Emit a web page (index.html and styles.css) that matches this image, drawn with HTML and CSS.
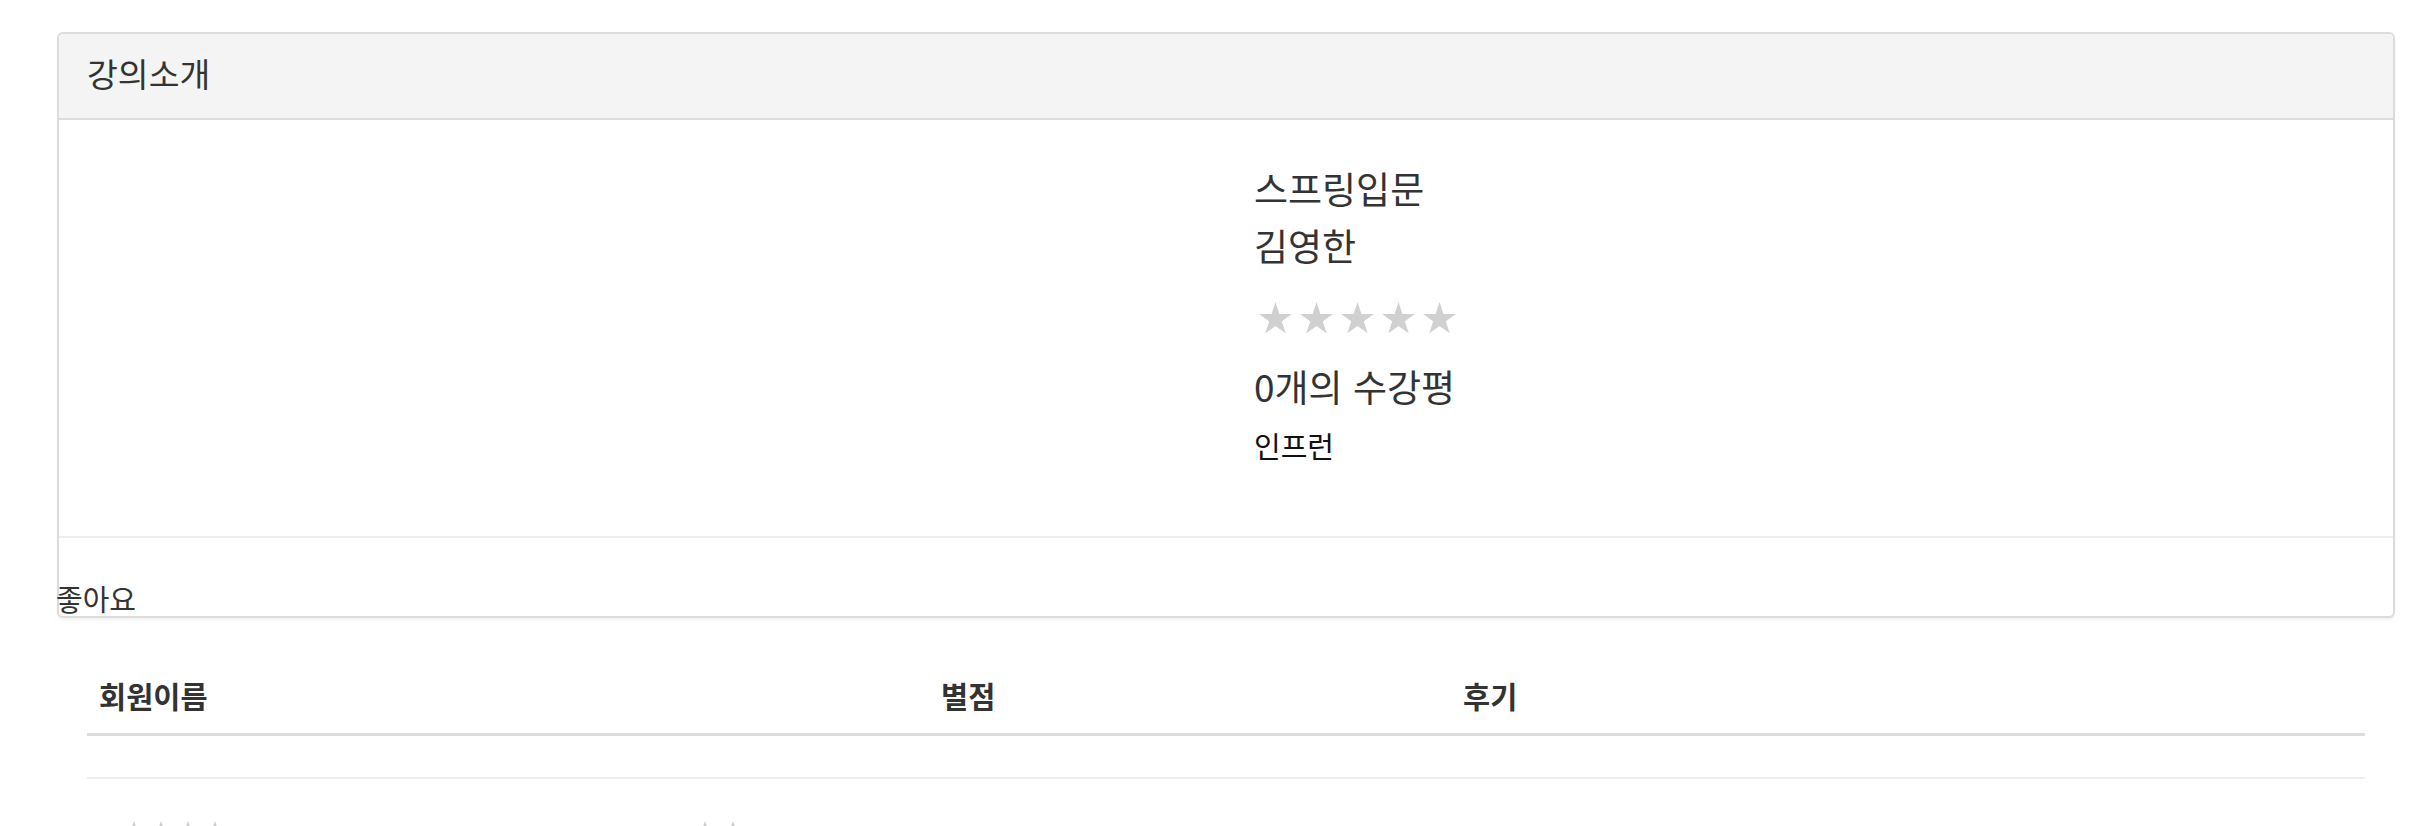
FILE: index.html
```html
<!DOCTYPE html>
<html lang="ko">
<head>
<meta charset="utf-8">
<title>강의소개</title>
<link rel="stylesheet" href="styles.css">
</head>
<body>
<div class="page">
  <div class="panel">
    <div class="panel-heading">강의소개</div>
    <div class="panel-body">
      <div class="col-left"></div>
      <div class="col-right">
        <div class="title">스프링입문</div>
        <div class="name">김영한</div>
        <div class="stars">
          <svg class="star" viewBox="0 0 33 32"><path d="M16.5 0 L20.39 11.95 L32.95 11.95 L22.79 19.34 L26.67 31.3 L16.5 23.91 L6.33 31.3 L10.21 19.34 L0.05 11.95 L12.61 11.95 Z"/></svg>
          <svg class="star" viewBox="0 0 33 32"><path d="M16.5 0 L20.39 11.95 L32.95 11.95 L22.79 19.34 L26.67 31.3 L16.5 23.91 L6.33 31.3 L10.21 19.34 L0.05 11.95 L12.61 11.95 Z"/></svg>
          <svg class="star" viewBox="0 0 33 32"><path d="M16.5 0 L20.39 11.95 L32.95 11.95 L22.79 19.34 L26.67 31.3 L16.5 23.91 L6.33 31.3 L10.21 19.34 L0.05 11.95 L12.61 11.95 Z"/></svg>
          <svg class="star" viewBox="0 0 33 32"><path d="M16.5 0 L20.39 11.95 L32.95 11.95 L22.79 19.34 L26.67 31.3 L16.5 23.91 L6.33 31.3 L10.21 19.34 L0.05 11.95 L12.61 11.95 Z"/></svg>
          <svg class="star" viewBox="0 0 33 32"><path d="M16.5 0 L20.39 11.95 L32.95 11.95 L22.79 19.34 L26.67 31.3 L16.5 23.91 L6.33 31.3 L10.21 19.34 L0.05 11.95 L12.61 11.95 Z"/></svg>
        </div>
        <div class="count">0개의 수강평</div>
        <div class="org">인프런</div>
      </div>
    </div>
    <div class="panel-footer"><span class="like">좋아요</span></div>
  </div>

  <table class="reviews">
    <colgroup>
      <col class="c1">
      <col class="c2">
      <col class="c3">
    </colgroup>
    <thead>
      <tr><th>회원이름</th><th>별점</th><th>후기</th></tr>
    </thead>
    <tbody>
      <tr class="empty"><td></td><td></td><td></td></tr>
      <tr class="row">
        <td>
          <div class="mini-line">
            <div class="mini-stars">
              <svg class="mini" viewBox="0 0 33 32"><path d="M16.5 0 L20.39 11.95 L32.95 11.95 L22.79 19.34 L26.67 31.3 L16.5 23.91 L6.33 31.3 L10.21 19.34 L0.05 11.95 L12.61 11.95 Z"/></svg>
              <svg class="mini" viewBox="0 0 33 32"><path d="M16.5 0 L20.39 11.95 L32.95 11.95 L22.79 19.34 L26.67 31.3 L16.5 23.91 L6.33 31.3 L10.21 19.34 L0.05 11.95 L12.61 11.95 Z"/></svg>
              <svg class="mini" viewBox="0 0 33 32"><path d="M16.5 0 L20.39 11.95 L32.95 11.95 L22.79 19.34 L26.67 31.3 L16.5 23.91 L6.33 31.3 L10.21 19.34 L0.05 11.95 L12.61 11.95 Z"/></svg>
              <svg class="mini" viewBox="0 0 33 32"><path d="M16.5 0 L20.39 11.95 L32.95 11.95 L22.79 19.34 L26.67 31.3 L16.5 23.91 L6.33 31.3 L10.21 19.34 L0.05 11.95 L12.61 11.95 Z"/></svg>
            </div>
            <div class="mini-stars second">
              <svg class="mini" viewBox="0 0 33 32"><path d="M16.5 0 L20.39 11.95 L32.95 11.95 L22.79 19.34 L26.67 31.3 L16.5 23.91 L6.33 31.3 L10.21 19.34 L0.05 11.95 L12.61 11.95 Z"/></svg>
              <svg class="mini" viewBox="0 0 33 32"><path d="M16.5 0 L20.39 11.95 L32.95 11.95 L22.79 19.34 L26.67 31.3 L16.5 23.91 L6.33 31.3 L10.21 19.34 L0.05 11.95 L12.61 11.95 Z"/></svg>
            </div>
          </div>
        </td>
        <td></td>
        <td></td>
      </tr>
    </tbody>
  </table>
</div>
</body>
</html>
```

FILE: styles.css
```css
* {
  box-sizing: border-box;
}

html, body {
  margin: 0;
  padding: 0;
  background: #fff;
  overflow: hidden;
}

body {
  font-family: "Noto Sans CJK KR", "Noto Sans", sans-serif;
  color: #333;
}

.page {
  padding: 32px 0 0 57px;
  width: 2422px;
}

.panel {
  width: 2338px;
  border: 2px solid #dcdcdc;
  border-radius: 6px;
  box-shadow: 0 2px 2px rgba(0, 0, 0, 0.05);
  background: #fff;
}

.panel-heading {
  height: 86px;
  background: #f4f4f4;
  border-bottom: 2px solid #dcdcdc;
  border-radius: 5px 5px 0 0;
  padding-left: 28px;
  font-size: 33.5px;
  line-height: 77px;
  color: #333;
}

.panel-body {
  display: flex;
  border-bottom: 2px solid #eeeeee;
}

.col-left {
  width: 1167px;
  flex: none;
}

.col-right {
  flex: 1;
  padding: 46px 0 74px 28px;
}

.title,
.name,
.count {
  font-size: 37px;
  line-height: 44px;
  color: #333;
}

.name {
  margin-top: 13px;
}

.stars {
  display: flex;
  gap: 8px;
  margin: 35px 0 0 5px;
  height: 32px;
}

.star {
  width: 33px;
  height: 32px;
  fill: #d0d0d0;
}

.count {
  margin-top: 30px;
}

.org {
  margin-top: 20px;
  font-size: 29px;
  line-height: 34px;
  color: #111;
}

.panel-footer {
  height: 78px;
  display: flex;
  align-items: flex-end;
}

.like {
  margin-left: -3px;
  font-size: 29px;
  line-height: 36px;
  color: #333;
}

.reviews {
  margin: 45px 0 0 30px;
  width: 2278px;
  table-layout: fixed;
  border-collapse: collapse;
  border-spacing: 0;
}

.c1 { width: 842px; }
.c2 { width: 522px; }
.c3 { width: 914px; }

.reviews th {
  text-align: left;
  font-weight: bold;
  font-size: 29.5px;
  line-height: 40px;
  padding: 12px 12px 18px;
  color: #333;
  border-bottom: 3px solid #dcdcdc;
}

.reviews td {
  padding: 0 12px;
  border-top: 2px solid #eeeeee;
}

.empty td {
  height: 43px;
  border-top: none;
}

.row td {
  height: 100px;
  vertical-align: top;
}

.mini-line {
  display: flex;
  margin: 42px 0 0 23px;
}

.mini-stars {
  display: flex;
  gap: 3px;
}

.mini-stars.second {
  margin-left: 466px;
  gap: 4px;
}

.mini {
  width: 24px;
  height: 23px;
  fill: #cccccc;
}
```
